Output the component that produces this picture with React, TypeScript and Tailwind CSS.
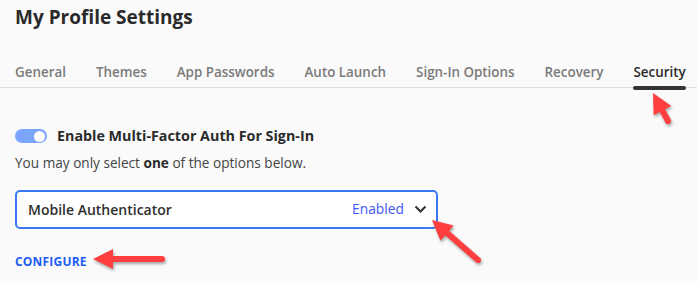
import React from "react";

const tabs = ["General", "Themes", "App Passwords", "Auto Launch", "Sign-In Options", "Recovery", "Security"];

function Arrow({ x1, y1, x2, y2 }: { x1: number; y1: number; x2: number; y2: number }) {
  const dx = x2 - x1;
  const dy = y2 - y1;
  const len = Math.sqrt(dx * dx + dy * dy);
  const ux = dx / len;
  const uy = dy / len;
  const headLen = 20;
  const headW = 10;
  const bx = x2 - ux * headLen;
  const by = y2 - uy * headLen;
  const px = -uy;
  const py = ux;
  const pts = `${x2},${y2} ${bx + px * headW},${by + py * headW} ${bx - px * headW},${by - py * headW}`;
  return (
    <g style={{ filter: "drop-shadow(1px 2px 1.5px rgba(0,0,0,0.35))" }}>
      <line x1={x1} y1={y1} x2={bx + ux * 2} y2={by + uy * 2} stroke="#ff3f3f" strokeWidth={6} strokeLinecap="round" />
      <polygon points={pts} fill="#ff3f3f" />
    </g>
  );
}

export default function App() {
  return (
    <div className="relative w-[697px] h-[281px] bg-[#fafafa] overflow-hidden" style={{ fontFamily: "'Open Sans', sans-serif" }}>
      <div className="px-[15px] pt-[3px]">
        <h1 className="text-[19px] font-bold text-[#2a2a2a] leading-[28px]">My Profile Settings</h1>
      </div>
      <div className="mt-[28px] border-b border-[#dedede] flex gap-[30px] pl-[15px] whitespace-nowrap">
        {tabs.map((t) => (
          <div key={t} className="relative h-[28px] shrink-0">
            <span className={`text-[13.4px] font-semibold leading-[18px] ${t === "Security" ? "text-[#2a2a2a]" : "text-[#7a7a7a]"}`}>{t}</span>
            {t === "Security" && <div className="absolute left-0 right-0 bottom-[-3px] h-[4px] rounded-full bg-[#333]" />}
          </div>
        ))}
      </div>
      <div className="px-[15px] pt-[38px]">
        <div className="flex items-center gap-[10px]">
          <div className="w-[32px] h-[14px] rounded-full bg-[#7ba4fd] flex items-center justify-end pr-[2px]">
            <div className="w-[11px] h-[11px] rounded-full bg-white" />
          </div>
          <span className="text-[14.3px] font-bold text-[#2a2a2a] leading-[20px]">Enable Multi-Factor Auth For Sign-In</span>
        </div>
        <p className="mt-[8px] text-[13.6px] text-[#444] leading-[18px]">
          You may only select <b className="font-bold text-[#2a2a2a]">one</b> of the options below.
        </p>
        <div className="mt-[18px] w-[423px] h-[39px] border-2 border-[#3b78f3] rounded-[5px] bg-white flex items-center pl-[11px] pr-[9px]">
          <span className="text-[14px] font-semibold text-[#2f2f2f] flex-1">Mobile Authenticator</span>
          <span className="text-[13.8px] text-[#3f57f2]">Enabled</span>
          <svg className="ml-[10px]" width="13" height="9" viewBox="0 0 13 9">
            <path d="M1.5 1.5 L6.5 6.5 L11.5 1.5" fill="none" stroke="#333" strokeWidth="2" />
          </svg>
        </div>
        <div className="mt-[25px] text-[12px] font-bold text-[#1d5cf2] tracking-[0.2px] leading-[16px]">CONFIGURE</div>
      </div>
      <svg className="absolute inset-0 pointer-events-none" width="697" height="281">
        <Arrow x1={668} y1={121} x2={653} y2={93} />
        <Arrow x1={478} y1={260} x2={432} y2={220} />
        <Arrow x1={162} y1={259} x2={93} y2={259} />
      </svg>
    </div>
  );
}
